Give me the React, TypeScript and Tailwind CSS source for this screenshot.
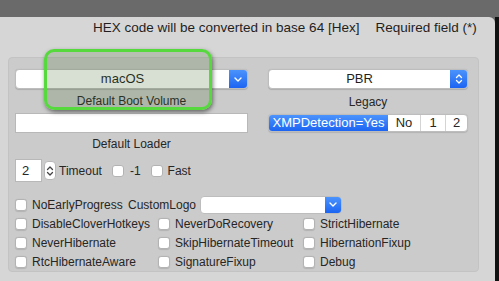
import React from "react";

function Check({ label }: { label: string }) {
  return (
    <div className="flex items-center gap-[5px] h-[19px]">
      <span className="w-[12px] h-[12px] shrink-0 rounded-[3px] bg-white border border-[#b3b3b3] shadow-[0_0.5px_1px_rgba(0,0,0,0.12)]" />
      <span className="leading-none whitespace-nowrap">{label}</span>
    </div>
  );
}

function Chevron() {
  return (
    <svg width="8" height="5" viewBox="0 0 8 5">
      <path d="M1 1l3 3 3-3" fill="none" stroke="white" strokeWidth="1.4" strokeLinecap="round" strokeLinejoin="round" />
    </svg>
  );
}

function UpDown({ color = "white" }: { color?: string }) {
  return (
    <svg width="8" height="12" viewBox="0 0 8 12">
      <path d="M1.5 4.5L4 2l2.5 2.5M1.5 7.5L4 10l2.5-2.5" fill="none" stroke={color} strokeWidth="1.3" strokeLinecap="round" strokeLinejoin="round" />
    </svg>
  );
}

export default function App() {
  return (
    <div className="relative w-[499px] h-[281px] overflow-hidden bg-[#6a6a6a] font-[family-name:'Liberation_Sans',Arial,sans-serif] text-[12px] text-[#262626]">
      <div className="flex h-full pt-[17px]">
        <div className="flex-1 flex flex-col bg-[#d6d6d6] rounded-tr-[6px]">
          <div className="h-[40px] flex items-start pt-[1px] pl-[93px] text-[13.5px] text-[#1f1f1f] gap-[16px] whitespace-nowrap">
            <span>HEX code will be converted in base 64 [Hex]</span>
            <span>Required field (*)</span>
          </div>
          <div className="mx-[8px] w-[471px] h-[215px] rounded-[4px] bg-[#cbcbcb] border border-[#c3c3c3] pt-[11px] pl-[6px]">
            <div className="flex gap-[20px]">
              <div className="w-[233px] flex flex-col items-stretch">
                <div className="h-[20px] flex bg-white rounded-[4px] border border-[#bdbdbd] shadow-[0_0.5px_1px_rgba(0,0,0,0.15)] overflow-hidden">
                  <div className="flex-1 flex items-center justify-center text-[13px] text-[#1f1f1f]">macOS</div>
                  <div className="w-[18px] flex items-center justify-center bg-gradient-to-b from-[#4b93fc] to-[#1d64f2]">
                    <Chevron />
                  </div>
                </div>
                <div className="h-[24px] flex items-center justify-center">Default Boot Volume</div>
                <div className="h-[20px] bg-white border border-[#b8b8b8]" />
                <div className="h-[21px] flex items-center justify-center">Default Loader</div>
              </div>
              <div className="w-[200px] flex flex-col">
                <div className="h-[20px] flex bg-white rounded-[4px] border border-[#bdbdbd] shadow-[0_0.5px_1px_rgba(0,0,0,0.15)] overflow-hidden">
                  <div className="flex-1 flex items-center justify-center text-[13px] text-[#1f1f1f]">PBR</div>
                  <div className="w-[17px] flex items-center justify-center bg-gradient-to-b from-[#4b93fc] to-[#1d64f2]">
                    <UpDown />
                  </div>
                </div>
                <div className="h-[25px] flex items-center justify-center">Legacy</div>
                <div className="h-[18px] flex rounded-[4px] overflow-hidden border border-[#bdbdbd] bg-white text-[13px] shadow-[0_0.5px_1px_rgba(0,0,0,0.12)]">
                  <div className="w-[119px] flex items-center justify-center text-white bg-gradient-to-b from-[#4b93fc] to-[#1d64f2]">XMPDetection=Yes</div>
                  <div className="w-[33px] flex items-center justify-center border-r border-[#d4d4d4]">No</div>
                  <div className="w-[25px] flex items-center justify-center border-r border-[#d4d4d4]">1</div>
                  <div className="flex-1 flex items-center justify-center">2</div>
                </div>
              </div>
            </div>

            <div className="flex items-center mt-[5px] h-[23px]">
              <div className="w-[27px] h-[23px] bg-white border border-[#b8b8b8] flex items-center pl-[6px] text-[13px]">2</div>
              <div className="ml-[2px] w-[12px] h-[19px] rounded-[4px] bg-white border border-[#b8b8b8] flex items-center justify-center">
                <UpDown color="#444" />
              </div>
              <span className="ml-[3px]">Timeout</span>
              <div className="ml-[10px] flex items-center gap-[6px]">
                <span className="w-[12px] h-[12px] rounded-[3px] bg-white border border-[#b3b3b3]" />
                <span>-1</span>
              </div>
              <div className="ml-[10px] flex items-center gap-[5px]">
                <span className="w-[12px] h-[12px] rounded-[3px] bg-white border border-[#b3b3b3]" />
                <span>Fast</span>
              </div>
            </div>

            <div className="flex items-center mt-[13px] h-[19px]">
              <div className="w-[113px]">
                <Check label="NoEarlyProgress" />
              </div>
              <span>CustomLogo</span>
              <div className="ml-[4px] w-[142px] h-[18px] flex bg-white rounded-[4px] border border-[#bdbdbd] overflow-hidden">
                <div className="flex-1" />
                <div className="w-[16px] flex items-center justify-center bg-gradient-to-b from-[#4b93fc] to-[#1d64f2]">
                  <Chevron />
                </div>
              </div>
            </div>

            <div className="grid grid-cols-[143px_145px_auto]">
              <Check label="DisableCloverHotkeys" />
              <Check label="NeverDoRecovery" />
              <Check label="StrictHibernate" />
              <Check label="NeverHibernate" />
              <Check label="SkipHibernateTimeout" />
              <Check label="HibernationFixup" />
              <Check label="RtcHibernateAware" />
              <Check label="SignatureFixup" />
              <Check label="Debug" />
            </div>
          </div>
        </div>
        <div className="w-[4px] bg-[#111]" />
      </div>

      <div className="absolute left-[44px] top-[49px] w-[168px] h-[61px] rounded-[10px] border-[3px] border-[#55d93d] bg-[rgba(60,100,40,0.2)] shadow-[1px_2px_4px_rgba(0,0,0,0.5)]" />
    </div>
  );
}
